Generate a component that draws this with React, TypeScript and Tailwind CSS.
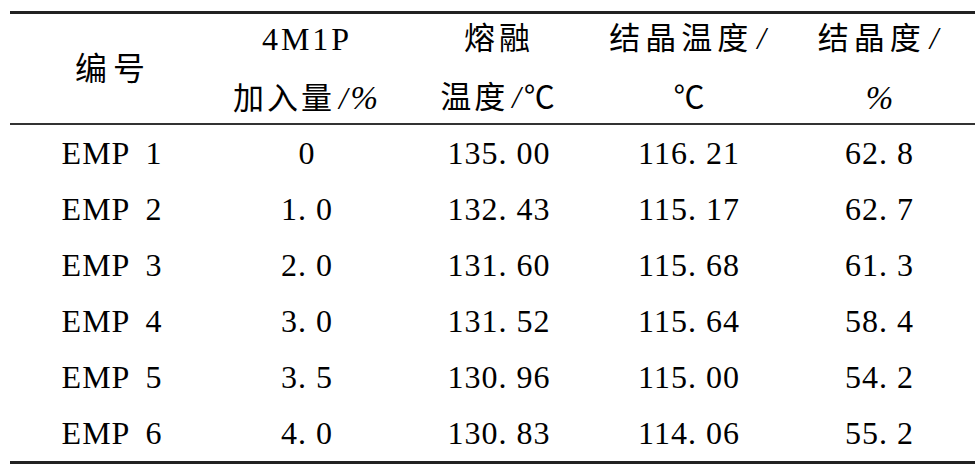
import React from "react";

const rows = [
  ["1", "0", "135. 00", "116. 21", "62. 8"],
  ["2", "1. 0", "132. 43", "115. 17", "62. 7"],
  ["3", "2. 0", "131. 60", "115. 68", "61. 3"],
  ["4", "3. 0", "131. 52", "115. 64", "58. 4"],
  ["5", "3. 5", "130. 96", "115. 00", "54. 2"],
  ["6", "4. 0", "130. 83", "114. 06", "55. 2"],
];

const widths = ["w-[200px]", "w-[194px]", "w-[190px]", "w-[190px]", "w-[191px]"];

function Slash() {
  return <span className="inline-block ml-[4px] mr-[3px] tracking-normal italic">/</span>;
}

export default function App() {
  return (
    <div
      className="w-[975px] h-[469px] bg-white text-black pl-[10px] pt-[11px]"
      style={{ fontFamily: '"Liberation Serif", "Noto Sans CJK SC", serif' }}
    >
      <div className="border-t-[3px] border-b-[3px] border-[#222]">
        <div className="flex h-[111px] border-b-2 border-[#333]">
          <div className={`${widths[0]} flex items-center justify-center text-[32px] tracking-[6px] pl-[6px]`}>
            编号
          </div>
          <div className={`${widths[1]} flex flex-col items-center text-[31px]`}>
            <div className="h-[50px] leading-[50px] tracking-[3px] text-[32px] whitespace-nowrap">4M1P</div>
            <div className="h-[50px] mt-[9px] leading-[50px] tracking-[3px] whitespace-nowrap">
              加入量<Slash />
              <span className="italic text-[33px]">%</span>
            </div>
          </div>
          <div className={`${widths[2]} flex flex-col items-center text-[31px]`}>
            <div className="h-[50px] leading-[50px] tracking-[4px] whitespace-nowrap">熔融</div>
            <div className="h-[50px] mt-[9px] leading-[50px] tracking-[3px] whitespace-nowrap">
              温度<Slash />℃
            </div>
          </div>
          <div className={`${widths[3]} flex flex-col items-center text-[31px]`}>
            <div className="h-[50px] leading-[50px] tracking-[5px] whitespace-nowrap">
              结晶温度<Slash />
            </div>
            <div className="h-[50px] mt-[9px] leading-[50px] whitespace-nowrap">℃</div>
          </div>
          <div className={`${widths[4]} flex flex-col items-center text-[31px]`}>
            <div className="h-[50px] leading-[50px] tracking-[5px] whitespace-nowrap">
              结晶度<Slash />
            </div>
            <div className="h-[50px] mt-[9px] leading-[50px] whitespace-nowrap italic text-[33px]">%</div>
          </div>
        </div>
        {rows.map((r, ri) => (
          <div key={ri} className="flex h-[56px] items-center">
            <div className={`${widths[0]} text-center text-[32px] leading-[56px] tracking-[1px] whitespace-pre pl-[4px]`}>
              EMP<span className="ml-[15px]">{r[0]}</span>
            </div>
            {r.slice(1).map((c, ci) => (
              <div
                key={ci}
                className={`${widths[ci + 1]} text-center text-[32px] leading-[56px] tracking-[1px] whitespace-pre`}
              >
                {c}
              </div>
            ))}
          </div>
        ))}
      </div>
    </div>
  );
}
